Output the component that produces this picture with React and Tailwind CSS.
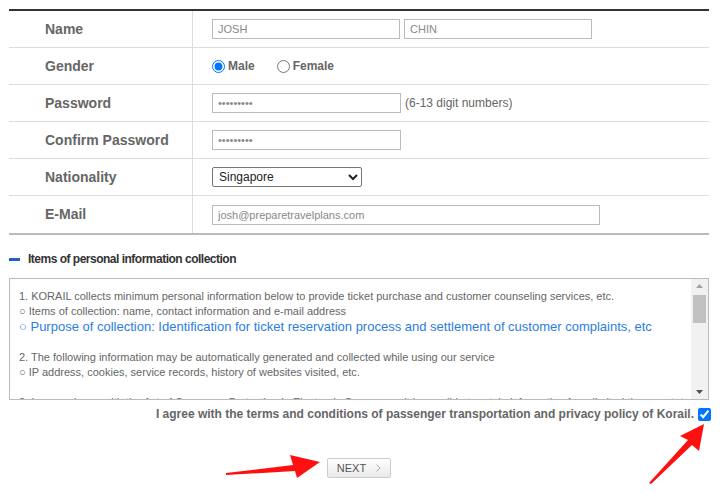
import React from "react";

const rows = [
  { label: "Name", kind: "name" },
  { label: "Gender", kind: "gender" },
  { label: "Password", kind: "password" },
  { label: "Confirm Password", kind: "confirm" },
  { label: "Nationality", kind: "nationality" },
  { label: "E-Mail", kind: "email" },
];

const inputClass =
  "h-[20px] border border-[#bbb] bg-white px-[5px] text-[11px] text-[#888] outline-none";

const FieldValue = ({ kind }) => {
  if (kind === "name") {
    return (
      <div className="flex items-center gap-[4px]">
        <input readOnly value="JOSH" className={`${inputClass} w-[188px]`} />
        <input readOnly value="CHIN" className={`${inputClass} w-[188px]`} />
      </div>
    );
  }
  if (kind === "gender") {
    return (
      <div className="flex items-center text-[12px] font-bold text-[#666]">
        <label className="flex items-center gap-[3px]">
          <input type="radio" name="gender" defaultChecked className="m-0 h-[13px] w-[13px]" />
          Male
        </label>
        <label className="ml-[22px] flex items-center gap-[3px]">
          <input type="radio" name="gender" className="m-0 h-[13px] w-[13px]" />
          Female
        </label>
      </div>
    );
  }
  if (kind === "password") {
    return (
      <div className="flex items-center">
        <input type="password" readOnly value="123456789" className={`${inputClass} w-[189px]`} />
        <span className="ml-[4px] text-[12px] text-[#666]">(6-13 digit numbers)</span>
      </div>
    );
  }
  if (kind === "confirm") {
    return <input type="password" readOnly value="123456789" className={`${inputClass} w-[189px]`} />;
  }
  if (kind === "nationality") {
    return (
      <select
        defaultValue="Singapore"
        className="h-[20px] w-[150px] rounded-[2px] border border-[#767676] bg-white pl-[2px] text-[12px] text-[#222]"
      >
        <option>Singapore</option>
        <option>Korea</option>
        <option>Japan</option>
      </select>
    );
  }
  return (
    <input readOnly value="josh@preparetravelplans.com" className={`${inputClass} w-[388px]`} />
  );
};

const FakeScrollbar = () => (
  <div className="flex w-[17px] flex-col bg-[#f1f1f1]">
    <div className="flex h-[14px] items-center justify-center">
      <svg width="7" height="4" viewBox="0 0 7 4">
        <path d="M3.5 0 L7 4 L0 4 Z" fill="#a3a3a3" />
      </svg>
    </div>
    <div className="mx-[2px] mt-[2px] h-[28px] bg-[#c1c1c1]" />
    <div className="flex-1" />
    <div className="flex h-[14px] items-center justify-center">
      <svg width="7" height="4" viewBox="0 0 7 4">
        <path d="M0 0 L7 0 L3.5 4 Z" fill="#505050" />
      </svg>
    </div>
  </div>
);

const App = () => {
  return (
    <div className="relative h-[493px] w-[725px] overflow-hidden bg-white pl-[9px] pt-[9px] font-['Liberation_Sans',Arial,sans-serif]">
      <div className="w-[700px]">
        <div className="border-t-2 border-b-2 border-t-[#333] border-b-[#bbb]">
          {rows.map((row, i) => (
            <div
              key={row.label}
              className={`flex h-[37px] ${i < rows.length - 1 ? "border-b border-[#ddd]" : ""}`}
            >
              <div className="flex w-[184px] items-center border-r border-[#ddd] pl-[36px] text-[14px] font-bold text-[#666]">
                {row.label}
              </div>
              <div className="flex items-center pl-[19px]">
                <FieldValue kind={row.kind} />
              </div>
            </div>
          ))}
        </div>

        <div className="mt-[16px] flex items-center gap-[8px]">
          <span className="h-[3px] w-[11px] bg-[#1e63c4]" />
          <h2 className="text-[12px] font-bold leading-[16px] tracking-[-0.5px] text-[#333]">
            Items of personal information collection
          </h2>
        </div>

        <div className="mt-[11px] flex h-[122px] border border-[#bbb]">
          <div className="flex-1 overflow-hidden pl-[9px] pt-[10px] text-[11px] leading-[15px] text-[#666]">
            <p className="whitespace-nowrap">
              1. KORAIL collects minimum personal information below to provide ticket purchase and customer counseling services, etc.
            </p>
            <p className="whitespace-nowrap">○ Items of collection: name, contact information and e-mail address</p>
            <p className="whitespace-nowrap text-[13px] leading-[16px] text-[#2b7de0]">
              ○ Purpose of collection: Identification for ticket reservation process and settlement of customer complaints, etc
            </p>
            <p className="h-[15px]" />
            <p className="whitespace-nowrap">
              2. The following information may be automatically generated and collected while using our service
            </p>
            <p className="whitespace-nowrap">○ IP address, cookies, service records, history of websites visited, etc.</p>
            <p className="h-[15px]" />
            <p className="h-[6px] overflow-hidden whitespace-nowrap leading-[15px]">
              3. In accordance with the Act of Consumer Protection in Electronic Commerce, it is possible to retain information for a limited time as stated below.
            </p>
          </div>
          <FakeScrollbar />
        </div>

        <div className="-mr-[2px] mt-[6px] flex items-center justify-end">
          <span className="text-[12px] font-bold leading-[16px] text-[#666]">
            I agree with the terms and conditions of passenger transportation and privacy policy of Korail.
          </span>
          <input type="checkbox" defaultChecked className="m-0 ml-[4px] h-[13px] w-[13px]" />
        </div>

        <div className="mt-[36px] flex justify-center">
          <button className="flex h-[20px] w-[64px] items-center justify-center gap-[10px] rounded-[2px] border border-[#ccc] bg-linear-to-b from-white to-[#e9e9e9] text-[11px] text-[#555]">
            <span>NEXT</span>
            <svg width="5" height="8" viewBox="0 0 5 8">
              <path d="M0.5 0.5 L4 4 L0.5 7.5" fill="none" stroke="#aaa" strokeWidth="1" />
            </svg>
          </button>
        </div>
      </div>

      <svg
        className="pointer-events-none absolute left-0 top-0"
        width="725"
        height="493"
        viewBox="0 0 725 493"
      >
        <polygon points="226,473 293,465 290,455 320,462 297,478 295,471 226,475" fill="#ff1010" />
        <polygon points="649,483 688,440 680,436 704,424 699,451 692,445 651,484" fill="#ff1010" />
      </svg>
    </div>
  );
};

export default App;
